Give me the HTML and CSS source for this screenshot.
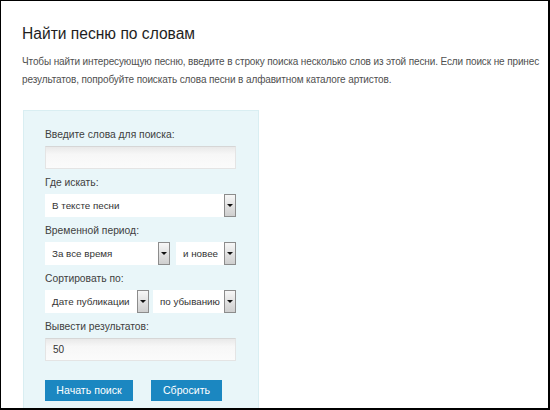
FILE: index.html
```html
<!DOCTYPE html>
<html lang="ru">
<head>
<meta charset="utf-8">
<title>Найти песню по словам</title>
<link rel="stylesheet" href="styles.css">
</head>
<body>
<div class="page">
  <h1 class="title">Найти песню по словам</h1>
  <p class="intro">Чтобы найти интересующую песню, введите в строку поиска несколько слов из этой песни. Если поиск не принес результатов, попробуйте поискать слова песни в алфавитном каталоге артистов.</p>
  <form class="panel">
    <div class="group">
      <div class="label">Введите слова для поиска:</div>
      <div class="input"></div>
    </div>
    <div class="group">
      <div class="label">Где искать:</div>
      <div class="select w-full"><span class="val">В тексте песни</span><span class="arrow"></span></div>
    </div>
    <div class="group">
      <div class="label">Временной период:</div>
      <div class="row gap6">
        <div class="select w-period"><span class="val">За все время</span><span class="arrow"></span></div>
        <div class="select grow"><span class="val">и новее</span><span class="arrow"></span></div>
      </div>
    </div>
    <div class="group">
      <div class="label">Сортировать по:</div>
      <div class="row gap4">
        <div class="select w-sort"><span class="val">Дате публикации</span><span class="arrow"></span></div>
        <div class="select grow"><span class="val">по убыванию</span><span class="arrow"></span></div>
      </div>
    </div>
    <div class="group">
      <div class="label">Вывести результатов:</div>
      <div class="input"><span class="val">50</span></div>
    </div>
    <div class="buttons">
      <span class="btn btn-search">Начать поиск</span>
      <span class="btn btn-reset">Сбросить</span>
    </div>
  </form>
</div>
</body>
</html>
```

FILE: styles.css
```css
html, body {
  margin: 0;
  padding: 0;
  background: #fff;
}
.page {
  box-sizing: border-box;
  width: 550px;
  height: 410px;
  border: 1px solid #000;
  border-bottom-width: 2px;
  border-right-width: 2px;
  overflow: hidden;
  padding: 23px 0 0 21px;
  font-family: "Liberation Sans", Arial, sans-serif;
}
.title {
  margin: 0;
  font-weight: normal;
  font-size: 15.6px;
  line-height: 20px;
  color: #1e1e1e;
}
.intro {
  margin: 9px 0 0 0;
  width: 526px;
  font-size: 10px;
  letter-spacing: -0.12px;
  line-height: 18px;
  color: #505050;
}
.panel {
  box-sizing: border-box;
  margin: 21px 0 0 1px;
  width: 236px;
  padding: 17px 22px 20px 21px;
  background: #e9f6f9;
  border: 1px solid #d9eef2;
}
.group {
  margin-bottom: 7px;
}
.label {
  font-size: 10.3px;
  line-height: 14px;
  color: #404040;
  margin-bottom: 4px;
}
.input {
  box-sizing: border-box;
  height: 23px;
  border: 1px solid #e4e4e4;
  border-top-color: #d6d6d6;
  background: linear-gradient(#e9e9e9, #f7f7f7 35%, #fbfbfb);
  font-size: 10px;
  line-height: 21px;
  color: #333;
  padding-left: 7px;
}
.row {
  display: flex;
}
.gap6 { gap: 6px; }
.gap4 { gap: 4px; }
.select {
  box-sizing: border-box;
  height: 23px;
  background: #fff;
  display: flex;
  align-items: stretch;
  font-size: 9.8px;
  color: #333;
}
.w-full { width: 191px; }
.w-period { width: 125px; }
.w-sort { width: 104px; }
.grow { flex: 1; }
.select .val {
  flex: 1;
  line-height: 23px;
  padding-left: 7px;
  white-space: nowrap;
  overflow: hidden;
}
.select .arrow {
  position: relative;
  box-sizing: border-box;
  width: 12px;
  border: 1px solid #8c8c8c;
  background: linear-gradient(#f7f7f7, #dedede 60%, #cfcfcf);
}
.select .arrow::after {
  content: "";
  position: absolute;
  left: 2px;
  top: 9px;
  border-left: 3px solid transparent;
  border-right: 3px solid transparent;
  border-top: 3px solid #111;
}
.buttons {
  display: flex;
  gap: 18px;
  margin-top: 19px;
}
.btn {
  display: block;
  box-sizing: border-box;
  height: 21px;
  line-height: 21px;
  background: #1b87c1;
  color: #fff;
  font-size: 10.6px;
  text-align: center;
}
.btn-search { width: 88px; }
.btn-reset { width: 71px; }
```
